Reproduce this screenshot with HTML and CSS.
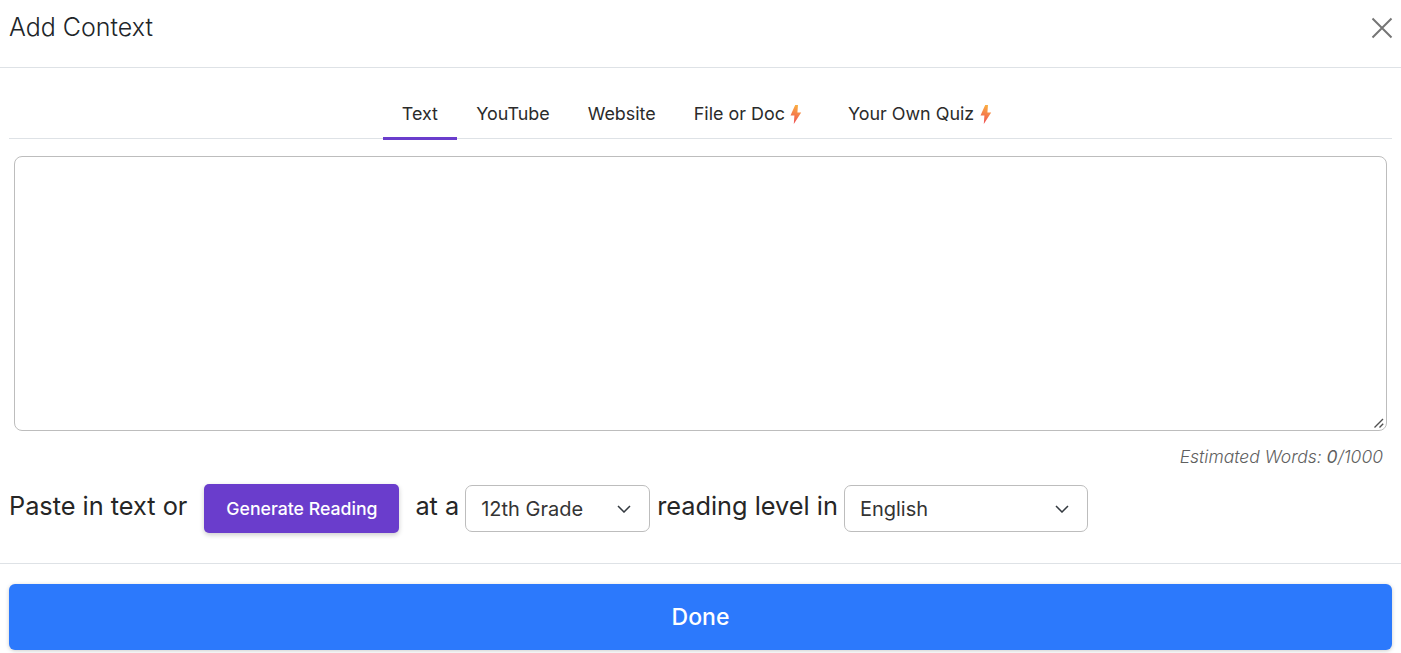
FILE: index.html
```html
<!DOCTYPE html>
<html lang="en">
<head>
<meta charset="utf-8">
<title>Add Context</title>
<link rel="stylesheet" href="styles.css">
</head>
<body>
<div class="modal">
  <header class="modal-header">
    <h1 class="modal-title">Add Context</h1>
    <button class="close" aria-label="Close">
      <svg width="22" height="22" viewBox="0 0 22 22"><path d="M1.5 1.5 20.5 20.5M20.5 1.5 1.5 20.5" fill="none" stroke="#757575" stroke-width="2"/></svg>
    </button>
  </header>
  <div class="modal-body">
    <nav class="tabs">
      <a class="tab active">Text</a>
      <a class="tab">YouTube</a>
      <a class="tab">Website</a>
      <a class="tab">File or Doc
        <svg class="bolt" width="12" height="19" viewBox="0 0 12 19"><defs><linearGradient id="b1" x1="0.6" y1="0" x2="0.4" y2="1"><stop offset="0" stop-color="#fbb040"/><stop offset="1" stop-color="#ee4f55"/></linearGradient></defs><path d="M5.2 0H8L7.4 7.5H11.2L3.8 19 4.4 10.5H.5Z" fill="url(#b1)"/></svg>
      </a>
      <a class="tab">Your Own Quiz
        <svg class="bolt" width="12" height="19" viewBox="0 0 12 19"><path d="M5.2 0H8L7.4 7.5H11.2L3.8 19 4.4 10.5H.5Z" fill="url(#b1)"/></svg>
      </a>
    </nav>
    <div class="context-wrap">
      <textarea class="context-input"></textarea>
      <svg class="grip" width="10" height="10" viewBox="0 0 10 10"><path d="M.5 9.5 9 1M5.5 9.5 9.2 5.8" fill="none" stroke="#505050" stroke-width="1.4"/></svg>
    </div>
    <p class="word-count">Estimated Words: <b>0</b>/1000</p>
    <div class="generate-row">
      <span class="label lead">Paste in text or</span>
      <button class="generate">Generate Reading</button>
      <span class="label at">at a</span>
      <div class="select grade"><span>12th Grade</span><svg width="14" height="8" viewBox="0 0 14 8"><path d="M1 1l6 6 6-6" fill="none" stroke="#343a40" stroke-width="1.5"/></svg></div>
      <span class="label">reading level in</span>
      <div class="select lang"><span>English</span><svg width="14" height="8" viewBox="0 0 14 8"><path d="M1 1l6 6 6-6" fill="none" stroke="#343a40" stroke-width="1.5"/></svg></div>
    </div>
  </div>
  <footer class="modal-footer">
    <button class="done">Done</button>
  </footer>
</div>
</body>
</html>
```
FILE: styles.css
```css
* { box-sizing: border-box; }
html, body { margin: 0; height: 100%; background: #fff; overflow: hidden; }
body { font-family: Inter, "Liberation Sans", sans-serif; color: #262626; }
.modal { display: flex; flex-direction: column; }
.modal-header { height: 68px; display: flex; align-items: center; justify-content: space-between; padding: 0 8px 14px 9px; border-bottom: 1px solid #dee2e6; }
.modal-title { margin: 0; font-size: 25px; font-weight: 300; line-height: 32px; color: #212529; }
.close { border: 0; background: none; padding: 0; display: flex; margin-top: 3px; }
.modal-body { padding: 0 9px; height: 496px; border-bottom: 1px solid #dee2e6; }
.tabs { height: 71px; display: flex; justify-content: center; align-items: flex-end; border-bottom: 1px solid #dee2e6; }
.tab { height: 49px; padding: 0 19px 1px; font-size: 17.92px; line-height: 48px; color: #2b2b2b; display: flex; align-items: center; gap: 5.5px; margin-bottom: -2px; border-bottom: 3px solid transparent; }
.tab.active { border-bottom-color: #6a3dcc; padding-right: 19.3px; }
.tab .bolt { flex: none; margin: 1px 7.5px 0 0; }
.context-wrap { position: relative; width: 1373px; margin: 17px 0 0 5px; }
.context-input { display: block; width: 100%; height: 275px; border: 1px solid #bdbdbd; border-radius: 8px; resize: none; outline: 0; background: #fff; }
.grip { position: absolute; right: 3px; bottom: 3px; }
.word-count { margin: 15px 9px 0 0; text-align: right; font-size: 17.5px; line-height: 22px; font-style: italic; font-weight: 300; color: #5f5f5f; }
.word-count b { font-weight: 400; }
.generate-row { display: flex; align-items: center; margin-top: 16px; font-size: 25.3px; color: #262626; height: 49px; }
.label { padding-bottom: 6px; }
.lead { margin-right: 17px; }
.generate { width: 195px; height: 49px; background: #6a3dcc; color: #fff; border: 0; border-radius: 5px; font: 500 17.7px Inter, sans-serif; box-shadow: 0 2px 5px rgba(0,0,0,.2); }
.at { margin: 0 6px 0 16px; }
.select { height: 47px; border: 1px solid #bdbdbd; border-radius: 7px; display: flex; align-items: center; justify-content: space-between; padding: 0 18px 0 15px; font-size: 20px; color: #343434; }
.grade { width: 185px; margin-right: 7px; }
.lang { width: 244px; margin-left: 6px; }
.modal-footer { padding: 20px 9px 0; }
.done { display: block; width: 100%; height: 66px; padding: 0; border: 0; border-radius: 6px; background: #2c79fc; color: #fff; font: 500 23px Inter, sans-serif; box-shadow: 0 1px 4px rgba(0,0,0,.2); }
```
